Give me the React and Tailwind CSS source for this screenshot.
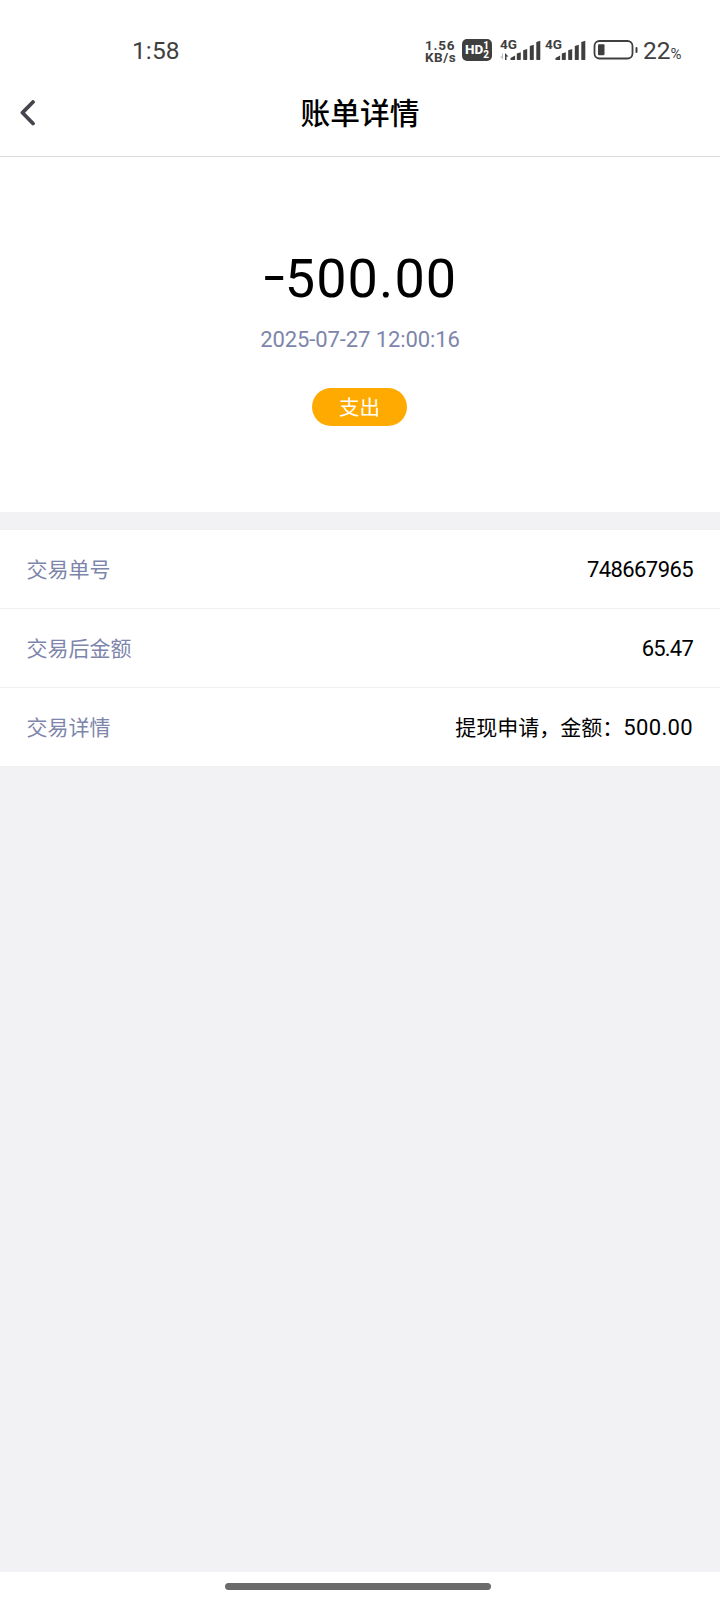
const registros = [
  { etiqueta: "交易单号", valor: "748667965", clase: "tracking-[-0.58px]" },
  { etiqueta: "交易后金额", valor: "65.47", clase: "tracking-[-0.8px]" }
];

function Senal({ flechas }) {
  return (
    <svg className="-mt-[6px]" width="42" height="30" viewBox="0 -6 42 30" fill="#3f3f3f">
      <text
        x="0"
        y="10.7"
        fontSize="13.5"
        fontWeight="700"
        fontFamily="Roboto, sans-serif"
        textLength="17"
      >
        4G
      </text>
      {flechas && (
        <>
          <path d="M3 15.5v6L0 18.5h2v-3z" fill="#bbb" />
          <path d="M5 22v-7l3.5 3.5H6.5V22z" />
        </>
      )}
      <path d="M10.5 22v-2l4.6-2.6V22z" />
      <path d="M16.8 21.5v-6l4-1.2v7.2l-.5.5h-3z" />
      <path d="M23.2 21.5v-9.3l4-1.2v10.5l-.5.5h-3z" />
      <path d="M29.8 21.5V8l4-1.2v14.7l-.5.5h-3z" />
      <path d="M36.3 21.5V4l4-1.2v18.7l-.5.5h-3z" />
    </svg>
  );
}

function BarraEstado() {
  return (
    <div className="h-[76px] pt-[38px] flex items-start text-[#3f3f3f]">
      <span className="ml-[132px] w-[293px] h-[25px] leading-[25px] text-[24.5px] font-[450] tracking-[0.1px]">
        1:58
      </span>

      <div className="pt-px w-[37px] text-[13.5px] leading-3 font-bold">
        <div className="h-3 tracking-[0.8px]">1.56</div>
        <div className="h-3 tracking-[0.5px]">KB/s</div>
      </div>

      <div className="mt-px w-[30px] h-[22px] rounded-[5px] bg-[#3f3f3f] text-white flex items-center justify-center">
        <span className="text-[13.5px] leading-none font-extrabold">HD</span>
        <span className="text-[10px] leading-[9.5px] font-extrabold">
          <span className="block">1</span>
          <span className="block">2</span>
        </span>
      </div>

      <div className="ml-2 flex gap-[3px]">
        <Senal flechas />
        <Senal />
      </div>

      <svg className="ml-[6px]" width="46" height="24" viewBox="0 0 46 24" fill="none">
        <rect x="1.5" y="3" width="38" height="17.5" rx="5" stroke="#3f3f3f" strokeWidth="1.8" />
        <rect x="5" y="6.3" width="6.5" height="11" rx="1" fill="#3f3f3f" />
        <rect x="42.5" y="9" width="2" height="6" rx="1" fill="#3f3f3f" />
      </svg>

      <div className="ml-1 h-[25px] leading-[25px] text-[24.5px] font-[450]">
        22<span className="text-[15px]">%</span>
      </div>
    </div>
  );
}

function Fila({ etiqueta, children }) {
  return (
    <div className="h-[79px] pt-[2px] pl-[26.5px] pr-[27px] flex items-center justify-between bg-white border-b border-[#efeff1] last:h-[78px] last:pt-px last:border-0">
      <span className="text-[21px] leading-[30px] text-[#7d85ab]">{etiqueta}</span>
      <span className="text-[22px] leading-[30px] text-black">{children}</span>
    </div>
  );
}

function App() {
  return (
    <div className="w-[720px] h-[1600px] flex flex-col bg-[#f2f2f4] font-[Roboto,'Noto_Sans_CJK_SC',sans-serif]">
      <header className="h-[157px] bg-white border-b border-[#dcdcdc]">
        <BarraEstado />
        <div className="h-[73px] px-5 grid grid-cols-3 items-center">
          <svg width="16" height="26" viewBox="0 0 16 26" fill="none">
            <path
              d="M13 2L2.5 12.7 13 23.5"
              stroke="#45464d"
              strokeWidth="3.8"
              strokeLinecap="round"
              strokeLinejoin="round"
            />
          </svg>
          <h1 className="pt-[2px] text-center text-[29.7px] leading-10 font-medium text-black">
            账单详情
          </h1>
        </div>
      </header>

      <section className="h-[355px] pt-[90px] bg-white flex flex-col items-center">
        <p className="pl-[4px] text-[54px] leading-[64px] tracking-[1.1px] text-black">
          <span className="inline-block mr-[2px] -translate-y-[3px] scale-x-[1.4]">-</span>500.00
        </p>
        <p className="mt-[13px] text-[22px] leading-8 tracking-[-0.1px] text-[#7d85ab]">
          2025-07-27 12:00:16
        </p>
        <span className="mt-8 mr-px pt-[2px] w-[95px] h-[38px] rounded-full bg-[#ffaa00] text-white text-[20.5px] flex items-center justify-center">
          支出
        </span>
      </section>

      <section className="mt-[18px]">
        {registros.map((registro) => (
          <Fila key={registro.etiqueta} etiqueta={registro.etiqueta}>
            <span className={registro.clase}>{registro.valor}</span>
          </Fila>
        ))}
        <Fila etiqueta="交易详情">
          <span className="text-[21px]">提现申请，金额：</span>
          <span className="tracking-[0.35px]">500.00</span>
        </Fila>
      </section>

      <footer className="mt-auto h-7 pt-[11px] bg-white">
        <div className="ml-[225px] w-[266px] h-[6.5px] rounded-full bg-[#6b6b6b]" />
      </footer>
    </div>
  );
}

export default App;
